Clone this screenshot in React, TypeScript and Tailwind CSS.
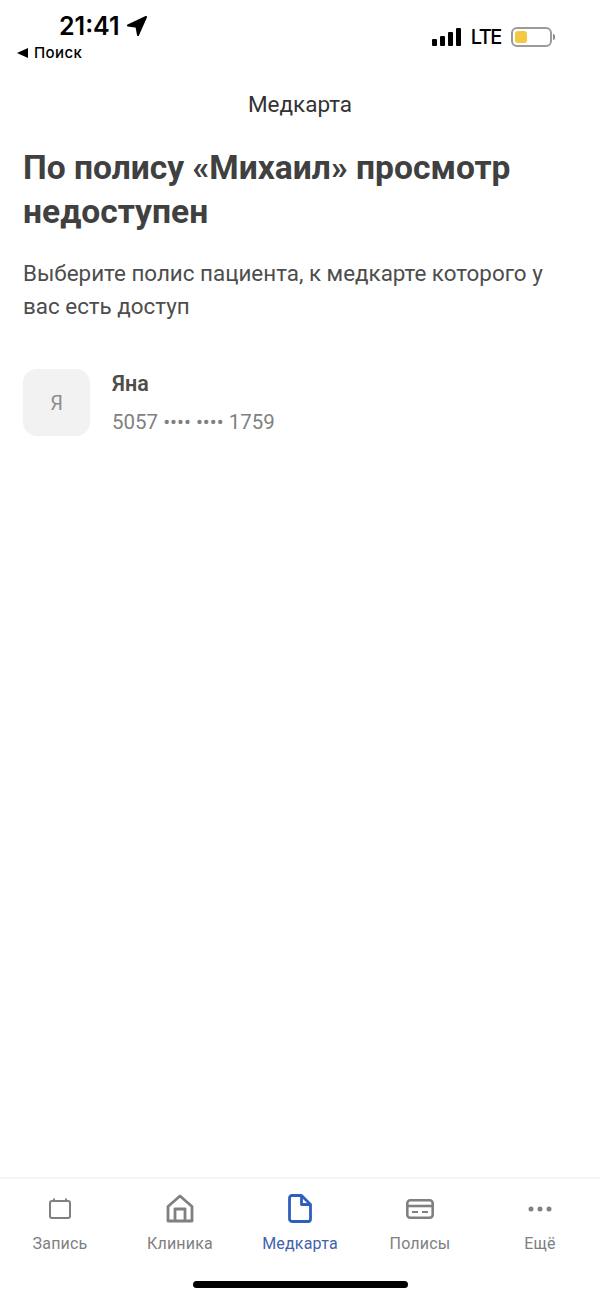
const font = { sans: "font-['Roboto','Liberation_Sans',sans-serif]" };

function CalendarIcon() {
  return (
    <svg width="24" height="24" viewBox="0 0 24 24" fill="none" stroke="#808080" strokeWidth="2">
      <rect x="2" y="4" width="20" height="17" rx="2" />
      <path d="M6 1.5v3M18 1.5v3" />
    </svg>
  );
}

function HomeIcon() {
  return (
    <svg width="28" height="30" viewBox="0 0 28 30" fill="none" stroke="#808080" strokeWidth="2.8" strokeLinejoin="round">
      <path d="M2 27V12.5L14 2l12 10.5V27z" />
      <path d="M9 27V15h10v12" />
    </svg>
  );
}

function FileIcon() {
  return (
    <svg width="24" height="29" viewBox="0 0 24 29" fill="none" stroke="#2f5fbd" strokeWidth="2.8" strokeLinejoin="round">
      <path d="M4 1.5h9.5l9 9V25a2.5 2.5 0 0 1-2.5 2.5H4A2.5 2.5 0 0 1 1.5 25V4A2.5 2.5 0 0 1 4 1.5z" />
      <path d="M13.5 1.5v9h9" />
    </svg>
  );
}

function CardIcon() {
  return (
    <svg width="28" height="20" viewBox="0 0 28 20" fill="none">
      <rect x="1.3" y="1.3" width="25.4" height="17.4" rx="3" stroke="#808080" strokeWidth="2.6" />
      <path d="M1 7h26" stroke="#808080" strokeWidth="2.6" />
      <path d="M6 13h6M16 13h6" stroke="#808080" strokeWidth="2.2" />
    </svg>
  );
}

function DotsIcon() {
  return (
    <svg width="24" height="6" viewBox="0 0 24 6" fill="#808080">
      <circle cx="3" cy="3" r="2.5" />
      <circle cx="12" cy="3" r="2.5" />
      <circle cx="21" cy="3" r="2.5" />
    </svg>
  );
}

const tabs = [
  { label: "Запись", icon: <CalendarIcon /> },
  { label: "Клиника", icon: <HomeIcon /> },
  { label: "Медкарта", icon: <FileIcon />, active: true },
  { label: "Полисы", icon: <CardIcon /> },
  { label: "Ещё", icon: <DotsIcon /> },
];

function StatusBar() {
  return (
    <div className="flex h-[72px] items-start justify-between">
      <div className="pl-[17px] pt-[11px]">
        <div className="flex items-center pl-[42px]">
          <span className="font-['Inter',sans-serif] text-[25px] leading-[30px] font-semibold text-black">21:41</span>
          <svg width="22" height="22" viewBox="0 0 22 22" className="ml-[6px]">
            <path d="M20 2 2 10.5l8.5 1.2L12 20z" fill="#000" stroke="#000" strokeWidth="2" strokeLinejoin="round" />
          </svg>
        </div>
        <div className="mt-[1px] flex items-center">
          <span className="h-0 w-0 border-y-[5px] border-r-[11px] border-y-transparent border-r-black" />
          <span className="ml-[6px] font-['Inter',sans-serif] text-[15px] leading-[22px] font-medium tracking-[0.4px] text-black">Поиск</span>
        </div>
      </div>
      <div className="flex items-center pt-[25px] pr-[45px]">
        <div className="flex items-end gap-[3px]">
          <span className="h-[7px] w-[5px] rounded-[1px] bg-black" />
          <span className="h-[10px] w-[5px] rounded-[1px] bg-black" />
          <span className="h-[14px] w-[5px] rounded-[1px] bg-black" />
          <span className="h-[18px] w-[5px] rounded-[1px] bg-black" />
        </div>
        <span className="ml-[10px] font-['Inter',sans-serif] text-[20px] leading-[24px] font-medium tracking-[-1.4px] text-black">LTE</span>
        <div className="ml-[10px] h-[20px] w-[41px] rounded-[6px] border-2 border-[#9b9b9b] p-[2px]">
          <div className="h-full w-[12px] rounded-[3px] bg-[#f5c842]" />
        </div>
        <span className="ml-[1px] h-[6px] w-[2px] rounded-r-full bg-[#8a8a8a]" />
      </div>
    </div>
  );
}

export default function App() {
  return (
    <div className={`flex h-[1297px] w-[600px] flex-col bg-white ${font.sans}`}>
      <StatusBar />
      <h1 className="mt-[19px] text-center text-[22.5px] leading-[26px] text-[#333333]">Медкарта</h1>

      <div className="flex-1 px-[23px]">
        <h2 className="mt-[29px] text-[33.6px] leading-[44px] font-bold text-[#404040]">
          По полису «Михаил» просмотр недоступен
        </h2>
        <p className="mt-[23px] text-[22.4px] leading-[33px] text-[#4d4d4d]">
          Выберите полис пациента, к медкарте которого у вас есть доступ
        </p>

        <div className="mt-[46px] flex gap-[22px]">
          <div className="flex size-[67px] items-center justify-center rounded-[14px] bg-[#f2f2f2] text-[20px] text-[#8c8c8c]">
            Я
          </div>
          <div>
            <div className="text-[21.5px] leading-[30px] font-semibold text-[#4d4d4d]">Яна</div>
            <div className="mt-[8px] text-[20.5px] leading-[30px] text-[#808080]">
              5057 •••• •••• 1759
            </div>
          </div>
        </div>
      </div>

      <nav className="h-[120px] border-t-2 border-[#f5f5f5]">
        <div className="grid grid-cols-5">
          {tabs.map((tab) => (
            <div key={tab.label} className="flex flex-col items-center">
              <div className="flex h-[53px] items-center pt-[6px]">{tab.icon}</div>
              <span className={`text-[16px] leading-[24px] tracking-[0.2px] ${tab.active ? "text-[#3f63ad]" : "text-[#808080]"}`}>
                {tab.label}
              </span>
            </div>
          ))}
        </div>
        <div className="mx-auto mt-[25px] h-[7px] w-[215px] rounded-full bg-black" />
      </nav>
    </div>
  );
}
